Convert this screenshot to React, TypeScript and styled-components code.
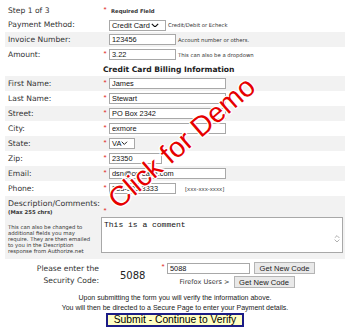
import React from 'react';
import styled, { createGlobalStyle } from 'styled-components';

const GlobalStyle = createGlobalStyle`
  html, body {
    margin: 0;
    padding: 0;
    background: #ffffff;
  }
  body {
    font-family: "DejaVu Sans", Verdana, sans-serif;
    color: #333333;
  }
`;

const Page = styled.div`
  position: relative;
  width: 350px;
  height: 327px;
  overflow: hidden;
  box-sizing: border-box;
  padding: 4px 5px 0 5px;
`;

const Form = styled.div`
  display: flex;
  flex-direction: column;
`;

const Row = styled.div<{ $shaded?: boolean; $h?: number }>`
  display: grid;
  grid-template-columns: 96px 1fr;
  align-items: center;
  height: ${props => props.$h ?? 15}px;
  background: ${props => (props.$shaded ? '#f2f2f2' : 'transparent')};
`;

const TallRow = styled(Row)`
  align-items: start;
`;

const Label = styled.div`
  padding-left: 3px;
  font-size: 7.6px;
  line-height: 10px;
  color: #333333;
  white-space: nowrap;
`;

const Value = styled.div`
  display: flex;
  align-items: center;
`;

const Star = styled.span`
  flex: none;
  width: 8px;
  height: 10px;
  text-align: center;
  font-family: "Liberation Sans", Arial, sans-serif;
  font-size: 8px;
  line-height: 8px;
  color: #e02a2a;
`;

const Tiny = styled.span<{ $bold?: boolean; $gap?: number }>`
  margin-left: ${props => props.$gap ?? 2}px;
  font-size: 5.3px;
  font-weight: ${props => (props.$bold ? 'bold' : 'normal')};
  color: #333333;
  white-space: nowrap;
`;

const TextInput = styled.input<{ $w: number }>`
  box-sizing: border-box;
  width: ${props => props.$w}px;
  height: 11px;
  margin: 0;
  padding: 0 2px;
  border: 1px solid #a8a8a8;
  background: #ffffff;
  font-family: "Liberation Sans", Arial, sans-serif;
  font-size: 7.4px;
  color: #111111;
  outline: none;
`;

const Select = styled.div<{ $w: number }>`
  box-sizing: border-box;
  display: flex;
  align-items: center;
  justify-content: space-between;
  width: ${props => props.$w}px;
  height: 11px;
  padding: 0 6px 0 2px;
  border: 1px solid #a8a8a8;
  background: #ffffff;
  font-family: "Liberation Sans", Arial, sans-serif;
  font-size: 7.4px;
  color: #111111;
  white-space: nowrap;
`;

const Heading = styled.div`
  padding-left: 2px;
  font-size: 7.6px;
  font-weight: bold;
  color: #222222;
  white-space: nowrap;
`;

const DescLabel = styled.div`
  padding: 3px 0 0 3px;
  color: #333333;
`;

const DescTitle = styled.div`
  font-size: 7.8px;
  line-height: 10px;
  white-space: nowrap;
`;

const DescMax = styled.div`
  font-size: 5.3px;
  font-weight: bold;
  line-height: 6px;
`;

const DescHelp = styled.div`
  margin-top: 8.6px;
  font-size: 5.3px;
  line-height: 6.15px;
`;

const DescValue = styled.div`
  display: flex;
  flex-direction: column;
  padding-top: 11px;
`;

const TextAreaBox = styled.div`
  box-sizing: border-box;
  display: flex;
  width: 242px;
  height: 36px;
  border: 1px solid #a8a8a8;
  background: #ffffff;
`;

const TextArea = styled.textarea`
  flex: 1;
  margin: 0;
  padding: 2px 2px;
  border: none;
  resize: none;
  outline: none;
  overflow: hidden;
  font-family: "Liberation Mono", "Courier New", monospace;
  font-size: 8px;
  color: #111111;
`;

const ScrollCol = styled.div`
  flex: none;
  width: 10px;
  display: flex;
  flex-direction: column;
  align-items: center;
  justify-content: flex-end;
  gap: 1px;
  padding-bottom: 9px;
`;

const SecurityRow = styled.div`
  display: grid;
  grid-template-columns: 96px 1fr;
  align-items: center;
  height: 32px;
`;

const SecurityLabel = styled.div`
  text-align: right;
  padding-right: 2px;
  font-size: 7.6px;
  line-height: 12px;
  color: #333333;
`;

const SecurityValue = styled.div`
  display: flex;
  align-items: center;
`;

const Code = styled.div`
  width: 31px;
  padding-left: 19px;
  font-size: 10px;
  color: #222222;
`;

const CodeBlock = styled.div`
  width: 172px;
  display: flex;
  flex-direction: column;
  align-items: center;
  gap: 2px;
`;

const CodeLine = styled.div`
  display: flex;
  align-items: center;
  gap: 4px;
`;

const Group = styled.div`
  display: flex;
  align-items: center;
`;

const GrayButton = styled.button`
  box-sizing: border-box;
  height: 12px;
  width: 61px;
  margin: 0;
  padding: 0;
  border: 1px solid #b4b4b4;
  background: #e9e9e9;
  font-family: "Liberation Sans", Arial, sans-serif;
  font-size: 7.6px;
  color: #222222;
`;

const Firefox = styled.span`
  font-size: 6.6px;
  color: #333333;
`;

const Notes = styled.div`
  padding-top: 2px;
  text-align: center;
  font-family: "Liberation Sans", Arial, sans-serif;
  font-size: 7px;
  line-height: 10px;
  color: #222222;
`;

const SubmitWrap = styled.div`
  display: flex;
  justify-content: center;
`;

const SubmitButton = styled.button`
  box-sizing: border-box;
  width: 138px;
  height: 14px;
  margin: 0;
  padding: 0;
  border: 2px solid #1c1c86;
  background: #ffffc4;
  font-family: "Liberation Sans", Arial, sans-serif;
  font-size: 10.3px;
  line-height: 10px;
  color: #000000;
`;

const Watermark = styled.div`
  position: absolute;
  left: 182px;
  top: 143px;
  transform: translate(-50%, -50%) rotate(-41deg);
  font-family: "Liberation Sans", Arial, sans-serif;
  font-size: 28px;
  color: #e60000;
  white-space: nowrap;
  pointer-events: none;
  text-shadow:
    1px 0 0 #fff, -1px 0 0 #fff, 0 1px 0 #fff, 0 -1px 0 #fff,
    1px 1px 0 #fff, -1px -1px 0 #fff, 1px -1px 0 #fff, -1px 1px 0 #fff;
`;

const Chevron: React.FC<{ up?: boolean; color?: string; w?: number }> = ({ up, color = '#111', w = 8 }) => (
  <svg width={w} height={w * 0.6} viewBox="0 0 10 6">
    <path
      d={up ? 'M1 5 L5 1 L9 5' : 'M1 1 L5 5 L9 1'}
      fill="none"
      stroke={color}
      strokeWidth={1.4}
    />
  </svg>
);

const fields = [
  { label: 'First Name:', value: 'James', w: 117 },
  { label: 'Last Name:', value: 'Stewart', w: 117 },
  { label: 'Street:', value: 'PO Box 2342', w: 117 },
  { label: 'City:', value: 'exmore', w: 117 },
];

export default function App() {
  return (
    <Page>
      <GlobalStyle />
      <Form>
        <Row $h={14}>
          <Label>Step 1 of 3</Label>
          <Value>
            <Star>*</Star>
            <Tiny $bold>Required Field</Tiny>
          </Value>
        </Row>
        <Row $h={14}>
          <Label>Payment Method:</Label>
          <Value>
            <Star />
            <Select $w={57}>
              <span>Credit Card</span>
              <Chevron />
            </Select>
            <Tiny>Credit/Debit or Echeck</Tiny>
          </Value>
        </Row>
        <Row $shaded>
          <Label>Invoice Number:</Label>
          <Value>
            <Star />
            <TextInput $w={67} readOnly defaultValue="123456" />
            <Tiny>Account number or others.</Tiny>
          </Value>
        </Row>
        <Row>
          <Label>Amount:</Label>
          <Value>
            <Star>*</Star>
            <TextInput $w={67} readOnly defaultValue="3.22" />
            <Tiny>This can also be a dropdown</Tiny>
          </Value>
        </Row>
        <Row $h={14}>
          <div />
          <Heading>Credit Card Billing Information</Heading>
        </Row>
        {fields.map((f, i) => (
          <Row key={f.label} $shaded={i % 2 === 0}>
            <Label>{f.label}</Label>
            <Value>
              <Star>*</Star>
              <TextInput $w={f.w} readOnly defaultValue={f.value} />
            </Value>
          </Row>
        ))}
        <Row $shaded>
          <Label>State:</Label>
          <Value>
            <Star>*</Star>
            <Select $w={26}>
              <span>VA</span>
              <Chevron w={7} />
            </Select>
          </Value>
        </Row>
        <Row>
          <Label>Zip:</Label>
          <Value>
            <Star>*</Star>
            <TextInput $w={53} readOnly defaultValue="23350" />
          </Value>
        </Row>
        <Row $shaded>
          <Label>Email:</Label>
          <Value>
            <Star>*</Star>
            <TextInput $w={117} readOnly defaultValue="dsn@coreave.com" />
          </Value>
        </Row>
        <Row>
          <Label>Phone:</Label>
          <Value>
            <Star>*</Star>
            <TextInput $w={67} readOnly defaultValue="333-333-3333" />
            <Tiny $gap={9}>[xxx-xxx-xxxx]</Tiny>
          </Value>
        </Row>
        <TallRow $shaded $h={63}>
          <DescLabel>
            <DescTitle>Description/Comments:</DescTitle>
            <DescMax>(Max 255 chrs)</DescMax>
            <DescHelp>
              This can also be changed to<br />
              additional fields you may<br />
              require. They are then emailed<br />
              to you in the Description<br />
              response from Authorize.net
            </DescHelp>
          </DescLabel>
          <DescValue>
            <Star>*</Star>
            <TextAreaBox>
              <TextArea readOnly defaultValue="This is a comment" />
              <ScrollCol>
                <Chevron up color="#a0a0a0" w={6} />
                <Chevron color="#a0a0a0" w={6} />
              </ScrollCol>
            </TextAreaBox>
          </DescValue>
        </TallRow>
        <SecurityRow>
          <SecurityLabel>
            Please enter the<br />
            Security Code:
          </SecurityLabel>
          <SecurityValue>
            <Code>5088</Code>
            <CodeBlock>
              <CodeLine>
                <Group>
                  <Star>*</Star>
                  <TextInput $w={83} readOnly defaultValue="5088" />
                </Group>
                <GrayButton>Get New Code</GrayButton>
              </CodeLine>
              <CodeLine>
                <Firefox>Firefox Users &gt;</Firefox>
                <GrayButton>Get New Code</GrayButton>
              </CodeLine>
            </CodeBlock>
          </SecurityValue>
        </SecurityRow>
        <Notes>
          Upon submitting the form you will verify the information above.<br />
          You will then be directed to a Secure Page to enter your Payment details.
        </Notes>
        <SubmitWrap>
          <SubmitButton>Submit - Continue to Verify</SubmitButton>
        </SubmitWrap>
      </Form>
      <Watermark>Click for Demo</Watermark>
    </Page>
  );
}
